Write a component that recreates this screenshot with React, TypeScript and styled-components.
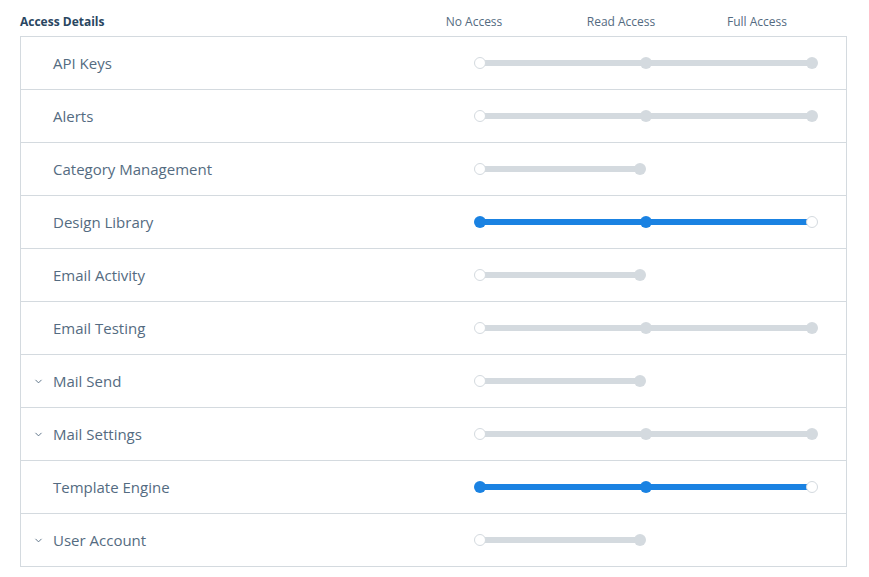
import styled, { createGlobalStyle } from "styled-components";
import { ChevronDown } from "lucide-react";

const Global = createGlobalStyle`
  body { margin: 0; background: #fff; font-family: "Open Sans", "Noto Sans", sans-serif; }
`;

const Page = styled.div`
  padding: 7px 22px 0 20px;
  width: 827px;
`;

const Header = styled.div`
  display: grid;
  grid-template-columns: 400px 108px 186px 86px;
  align-items: center;
  height: 29px;
  font-size: 12px;
  color: #546b81;
`;

const Title = styled.div`
  font-weight: 700;
  color: #294661;
  font-size: 12px;
`;

const ColLabel = styled.div`
  text-align: center;
  white-space: nowrap;
`;

const Table = styled.div`
  border: 1px solid #d4dadf;
`;

const Row = styled.div<{ $last?: boolean }>`
  display: flex;
  align-items: center;
  height: 52px;
  border-bottom: ${(p) => (p.$last ? "none" : "1px solid #d4dadf")};
`;

const Caret = styled.div`
  width: 30px;
  display: flex;
  justify-content: center;
  padding-left: 2px;
  color: #546b81;
`;

const Name = styled.div`
  width: 421px;
  font-size: 15px;
  color: #546b81;
`;

const Slider = styled.div<{ $w: number }>`
  position: relative;
  width: ${(p) => p.$w}px;
  height: 12px;
`;

const Track = styled.div<{ $blue?: boolean }>`
  position: absolute;
  left: 6px;
  right: 6px;
  top: 3px;
  height: 6px;
  border-radius: 3px;
  background: ${(p) => (p.$blue ? "#1a82e2" : "#d4dadf")};
`;

const Dot = styled.div<{ $kind: "white" | "gray" | "blue" }>`
  position: absolute;
  top: 0;
  width: 12px;
  height: 12px;
  box-sizing: border-box;
  border-radius: 50%;
  background: ${(p) => (p.$kind === "white" ? "#fff" : p.$kind === "blue" ? "#1a82e2" : "#d4dadf")};
  border: ${(p) => (p.$kind === "white" ? "1px solid #d4dadf" : "none")};
`;

type Kind = "three" | "two" | "blue";

const rows: { name: string; kind: Kind; caret?: boolean }[] = [
  { name: "API Keys", kind: "three" },
  { name: "Alerts", kind: "three" },
  { name: "Category Management", kind: "two" },
  { name: "Design Library", kind: "blue" },
  { name: "Email Activity", kind: "two" },
  { name: "Email Testing", kind: "three" },
  { name: "Mail Send", kind: "two", caret: true },
  { name: "Mail Settings", kind: "three", caret: true },
  { name: "Template Engine", kind: "blue" },
  { name: "User Account", kind: "two", caret: true },
];

function AccessSlider({ kind }: { kind: Kind }) {
  if (kind === "two") {
    return (
      <Slider $w={172}>
        <Track />
        <Dot $kind="white" style={{ left: 0 }} />
        <Dot $kind="gray" style={{ left: 160 }} />
      </Slider>
    );
  }
  const blue = kind === "blue";
  return (
    <Slider $w={344}>
      <Track $blue={blue} />
      <Dot $kind={blue ? "blue" : "white"} style={{ left: 0 }} />
      <Dot $kind={blue ? "blue" : "gray"} style={{ left: 166 }} />
      <Dot $kind={blue ? "white" : "gray"} style={{ left: 332 }} />
    </Slider>
  );
}

export default function App() {
  return (
    <Page>
      <Global />
      <Header>
        <Title>Access Details</Title>
        <ColLabel>No Access</ColLabel>
        <ColLabel>Read Access</ColLabel>
        <ColLabel>Full Access</ColLabel>
      </Header>
      <Table>
        {rows.map((r, i) => (
          <Row key={r.name} $last={i === rows.length - 1}>
            <Caret>{r.caret && <ChevronDown size={11} strokeWidth={2} />}</Caret>
            <Name>{r.name}</Name>
            <AccessSlider kind={r.kind} />
          </Row>
        ))}
      </Table>
    </Page>
  );
}
